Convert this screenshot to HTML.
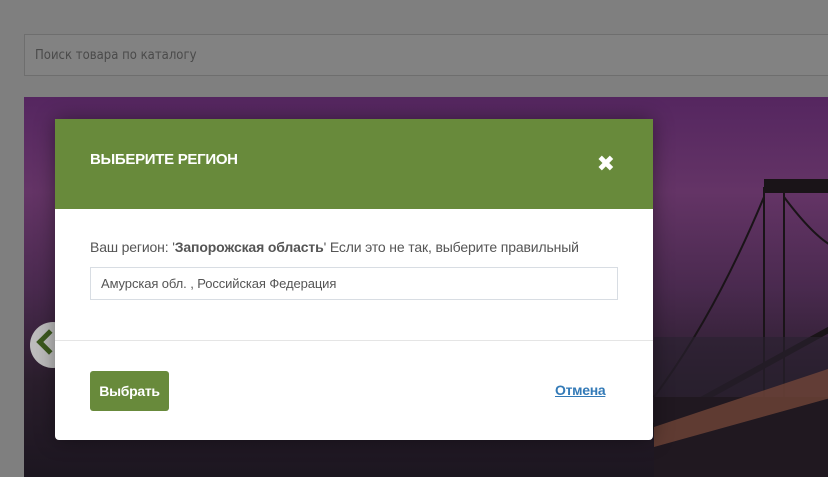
<!DOCTYPE html>
<html><head><meta charset="utf-8"><style>
*{margin:0;padding:0;box-sizing:border-box}
body{width:828px;height:467px;overflow:hidden;background:#7f7f7f;font-family:"Liberation Sans",sans-serif;position:relative}
.search{position:absolute;left:24px;top:34px;width:820px;height:42px;background:#828282;border:1px solid #6e6e6e;color:#4a4a4a;padding:13px 10px;font-family:"DejaVu Sans Condensed","Liberation Sans",sans-serif;font-size:13px}
.img{position:absolute;left:24px;top:97px;width:810px;height:380px;background:linear-gradient(180deg,#552660 0%,#643466 25%,#4a2a4f 50%,#2a1e2c 75%,#1c1620 100%)}
.modal{position:absolute;left:55px;top:119px;width:598px;height:321px;background:#fff;border-radius:0 0 4px 4px;box-shadow:0 0 20px rgba(0,0,0,.4)}
.hd{height:90px;background:#688a3b;color:#fff;font-weight:bold;font-size:15px;padding:32px 35px;letter-spacing:-0.3px}
.x{position:absolute;right:38px;top:33px;color:#fff;font-size:22px;font-weight:bold;font-family:"DejaVu Sans",sans-serif}
.txt{position:absolute;left:35px;top:120px;font-size:14px;color:#555;letter-spacing:-0.15px}
.inp{position:absolute;left:35px;top:148px;width:528px;height:33px;border:1px solid #d8dde3;font-size:13px;color:#555;padding:8px 10px;letter-spacing:-0.1px}
.hr{position:absolute;left:0;right:0;top:221px;border-top:1px solid #e5e5e5}
.btn{position:absolute;left:35px;top:252px;width:79px;height:40px;background:#688a3b;border-radius:3px;color:#fff;font-weight:bold;font-size:14px;text-align:center;line-height:40px;letter-spacing:-0.3px}
.cancel{position:absolute;left:500px;top:263px;color:#337ab7;font-weight:bold;font-size:14px;text-decoration:underline;letter-spacing:-0.3px}
.arrow{position:absolute;left:30px;top:322px;width:46px;height:46px;border-radius:50%;background:#bdbdbd}
.chev{position:absolute;left:40px;top:333px;width:18px;height:18px;border-left:5px solid #3c5a1e;border-bottom:5px solid #3c5a1e;transform:rotate(45deg);transform-origin:center}
</style></head><body>
<div class="search">Поиск товара по каталогу</div>
<div class="img">
<svg width="810" height="380" style="position:absolute;left:0;top:0">
<g stroke="#1a1418" fill="none" stroke-width="2">
<path d="M740 90 L740 380 M760 85 L760 380"/>
<path d="M740 100 Q690 220 630 300 M760 100 Q790 140 810 150"/>
<path d="M628 330 L810 230" stroke-width="6"/>
</g>
<rect x="740" y="82" width="70" height="14" fill="#1a1418"/>
<rect x="630" y="240" width="180" height="60" fill="#2a2230" opacity=".6"/>
<rect x="630" y="300" width="180" height="80" fill="#201820"/>
<path d="M630 330 L810 270 L810 300 L630 350Z" fill="#7a4a3a" opacity=".7"/>
</svg>
</div>
<div class="arrow"></div>
<div class="chev"></div>
<div class="modal">
<div class="hd">ВЫБЕРИТЕ РЕГИОН</div>
<div class="x">✖</div>
<div class="txt">Ваш регион: '<b>Запорожская область</b>' Если это не так, выберите правильный</div>
<div class="inp">Амурская обл. , Российская Федерация</div>
<div class="hr"></div>
<div class="btn">Выбрать</div>
<div class="cancel">Отмена</div>
</div>
</body></html>
